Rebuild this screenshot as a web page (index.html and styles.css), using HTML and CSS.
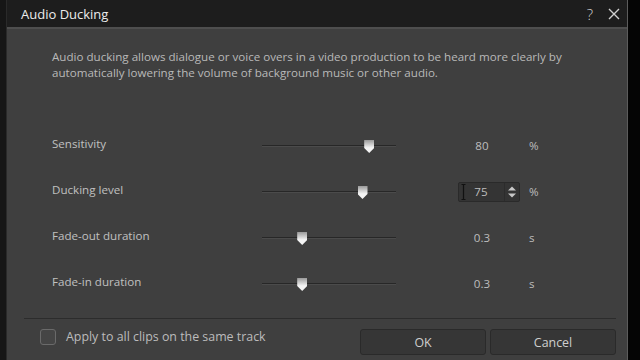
FILE: index.html
```html
<!DOCTYPE html>
<html lang="en">
<head>
  <meta charset="UTF-8" />
  <meta name="viewport" content="width=device-width, initial-scale=1" />
  <title>Audio Ducking</title>
  <link rel="stylesheet" href="styles.css">
</head>
<body>
  <div class="edge-left"></div>

  <div class="dialog">
    <header class="titlebar">
      <span class="title">Audio Ducking</span>
      <span class="help">?</span>
      <svg class="close" width="12" height="12" viewBox="0 0 12 12">
        <path d="M1 1 L11 11 M11 1 L1 11" stroke="#d0d0d0" stroke-width="1.4" fill="none" />
      </svg>
    </header>

    <div class="content">
      <p class="intro">Audio ducking allows dialogue or voice overs in a video production to be heard more clearly by automatically lowering the volume of background music or other audio.</p>

      <div class="settings">
        <div class="row">
          <span class="label">Sensitivity</span>
          <div class="slider"><span class="thumb" style="left: 80%"></span></div>
          <span class="value">80</span>
          <span class="unit">%</span>
        </div>
        <div class="row">
          <span class="label">Ducking level</span>
          <div class="slider"><span class="thumb" style="left: 75%"></span></div>
          <span class="value spin">
            <svg class="caret" width="5" height="16" viewBox="0 0 5 16">
              <path d="M0.5 0.5 H4.5 M2.5 0.5 V15.5 M0.5 15.5 H4.5" stroke="#111" stroke-width="1.2" fill="none" />
            </svg>
            <span class="spin-text">75</span>
            <span class="spin-arrows">
              <svg width="10" height="14" viewBox="0 0 10 14">
                <path d="M1 5.5 L5 1.5 L9 5.5 Z M1 8.5 L5 12.5 L9 8.5 Z" fill="#c8c8c8" />
              </svg>
            </span>
          </span>
          <span class="unit">%</span>
        </div>
        <div class="row">
          <span class="label">Fade-out duration</span>
          <div class="slider"><span class="thumb" style="left: 30%"></span></div>
          <span class="value">0.3</span>
          <span class="unit">s</span>
        </div>
        <div class="row">
          <span class="label">Fade-in duration</span>
          <div class="slider"><span class="thumb" style="left: 30%"></span></div>
          <span class="value">0.3</span>
          <span class="unit">s</span>
        </div>
      </div>
    </div>

    <footer class="footer">
      <label class="check">
        <span class="box"></span>
        <span>Apply to all clips on the same track</span>
      </label>
      <div class="buttons">
        <button class="btn">OK</button>
        <button class="btn">Cancel</button>
      </div>
    </footer>
  </div>

  <div class="edge-right"></div>
</body>
</html>
```

FILE: styles.css
```css
body {
  margin: 0;
  width: 640px;
  height: 360px;
  overflow: hidden;
  display: flex;
  background: #0c0c0c;
  font-family: 'Open Sans', 'Noto Sans', sans-serif;
  color: #bdbdbd;
}

.edge-left {
  width: 6px;
  background: #161616;
}

.edge-right {
  flex: 1;
  background: #050505;
}

.dialog {
  width: 620px;
  height: 360px;
  display: flex;
  flex-direction: column;
  background: #3f3f3f;
  border-left: 1px solid #2a2a2a;
  border-right: 1px solid #5c5c5c;
}

/* Заголовок окна */
.titlebar {
  flex-shrink: 0;
  height: 27px;
  display: flex;
  align-items: center;
  background: #1d1d1d;
  border-bottom: 2px solid #4e4e4e;
  padding: 0 7px 0 14px;
}

.title {
  flex: 1;
  font-size: 13px;
  color: #ececec;
}

.help {
  font-size: 15px;
  font-weight: 300;
  color: #d0d0d0;
  margin-right: 15px;
}

.content {
  padding: 20px 0 0 45px;
}

.intro {
  margin: 0;
  width: 530px;
  font-size: 11.6px;
  line-height: 16px;
  color: #b9b9b9;
}

.settings {
  margin-top: 64px;
  display: flex;
  flex-direction: column;
}

.row {
  height: 46px;
  display: flex;
  align-items: flex-start;
  font-size: 11.6px;
}

.row:last-child {
  height: 26px;
}

.label {
  width: 210px;
  line-height: 20px;
  margin-top: -11px;
  color: #c0c0c0;
}

.slider {
  position: relative;
  width: 134px;
  height: 1px;
  background: #272727;
  border-bottom: 1px solid #4b4b4b;
}

.thumb {
  position: absolute;
  top: -5px;
  width: 10px;
  height: 13px;
  margin-left: -5px;
  background: linear-gradient(#9a9a9a, #f4f4f4 60%);
  clip-path: polygon(0 0, 100% 0, 100% 62%, 50% 100%, 0 62%);
}

.value {
  margin-left: 62px;
  width: 48px;
  height: 20px;
  margin-top: -9px;
  line-height: 20px;
  text-align: center;
  color: #bdbdbd;
}

.spin {
  width: 62px;
  box-sizing: border-box;
  display: flex;
  align-items: center;
  background: #343434;
  border: 1px solid #2a2a2a;
  border-radius: 2px;
}

.caret {
  margin-left: 2px;
}

.spin-text {
  flex: 1;
  text-align: center;
  padding-right: 8px;
}

.spin-arrows {
  width: 14px;
  height: 18px;
  display: flex;
  align-items: center;
  justify-content: center;
  border-left: 1px solid #2c2c2c;
}

.unit {
  margin-left: 23px;
  line-height: 20px;
  margin-top: -9px;
  color: #bdbdbd;
}

.row:nth-child(2) .unit {
  margin-left: 9px;
}

/* Нижняя панель */
.footer {
  flex-shrink: 0;
  margin-top: auto;
  margin-left: 17px;
  margin-right: 11px;
  height: 42px;
  border-top: 1px solid #2c2c2c;
  display: flex;
  align-items: flex-start;
  padding-top: 10px;
  box-sizing: border-box;
}

.check {
  flex: 1;
  display: flex;
  align-items: center;
  gap: 10px;
  margin-left: 16px;
  margin-top: -1px;
  font-size: 12.4px;
  color: #bcbcbc;
}

.box {
  width: 14px;
  height: 14px;
  border: 1px solid #6a6a6a;
  border-radius: 3px;
  background: #454545;
}

.buttons {
  display: flex;
  gap: 4px;
}

.btn {
  width: 126px;
  height: 26px;
  background: #363636;
  border: 1px solid #2a2a2a;
  border-radius: 3px;
  color: #cfcfcf;
  font-family: inherit;
  font-size: 12.4px;
}
```
